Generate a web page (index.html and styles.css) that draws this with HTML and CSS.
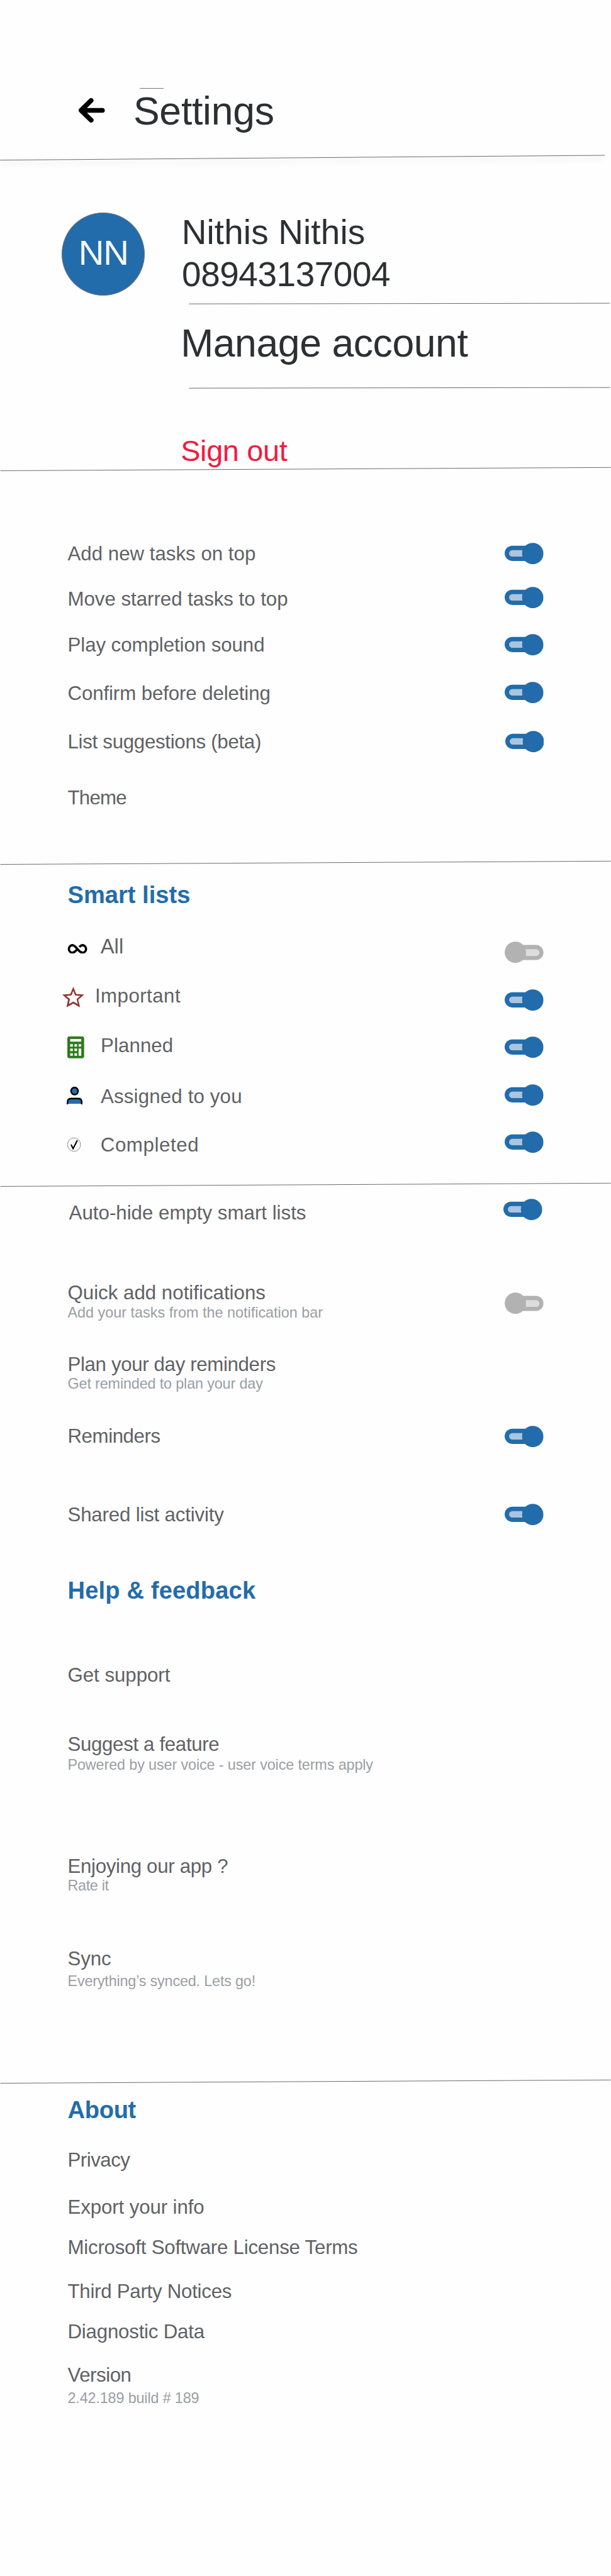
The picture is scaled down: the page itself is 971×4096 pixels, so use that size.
FILE: index.html
```html
<!DOCTYPE html>
<html lang="en">
<head>
<meta charset="utf-8">
<title>Settings</title>
<link rel="stylesheet" href="styles.css">
</head>
<body>
<svg class="defs" aria-hidden="true">
  <symbol id="on" viewBox="0 0 81 45">
    <rect x="0" y="6.3" width="60" height="31.6" rx="15.8" fill="#236cab"/>
    <circle cx="58.6" cy="22.5" r="22.3" fill="#236cab"/>
    <path d="M37 15.3H16a6.8 6.8 0 0 0 0 13.6H37q-1.3-6.8 0-13.6z" fill="#a9c5df"/>
  </symbol>
  <symbol id="off" viewBox="0 0 81 45">
    <rect x="21" y="7.2" width="60" height="31.6" rx="15.8" fill="#b2b2b2"/>
    <circle cx="22.4" cy="22.5" r="22.3" fill="#b2b2b2"/>
    <path d="M44 16.2H65.500a7 7 0 0 1 0 14H44q1.300-7 0-14z" fill="#dcddde"/>
  </symbol>
  <symbol id="rule" viewBox="0 0 1274 11">
    <path d="M0 8.500L1274 1.700" stroke="#6b6b6b" stroke-width="1.300"/>
  </symbol>
  <symbol id="shortrule" viewBox="0 0 881 5">
    <path d="M0 2.900L881 1.500" stroke="#6b6b6b" stroke-width="1.300"/>
  </symbol>
</svg>

<header class="header">
  <svg class="back" viewBox="0 0 54.500 51"><path d="M26 5L5 25.500L26 46M6 25.500H49.500" fill="none" stroke="#000" stroke-width="10" stroke-linecap="round" stroke-linejoin="round"/></svg>
  <div class="heading">
    <div class="tick"></div>
    <h1 class="title">Settings</h1>
  </div>
</header>
<svg class="header-rule" viewBox="0 0 1274 13"><path d="M0 11.300L1261 1.300" stroke="#6b6b6b" stroke-width="1.300"/></svg>

<section class="account">
  <div class="avatar">NN</div>
  <div class="info">
    <div class="name">Nithis Nithis</div>
    <div class="phone">08943137004</div>
    <svg class="short-rule first"><use href="#shortrule"/></svg>
    <div class="manage">Manage account</div>
    <svg class="short-rule second"><use href="#shortrule"/></svg>
    <div class="signout">Sign out</div>
  </div>
</section>
<svg class="rule rule-account"><use href="#rule"/></svg>

<section class="group">
  <div class="row add"><span>Add new tasks on top</span><svg class="toggle"><use href="#on"/></svg></div>
  <div class="row move"><span>Move starred tasks to top</span><svg class="toggle"><use href="#on"/></svg></div>
  <div class="row play"><span>Play completion sound</span><svg class="toggle"><use href="#on"/></svg></div>
  <div class="row confirm"><span>Confirm before deleting</span><svg class="toggle"><use href="#on"/></svg></div>
  <div class="row suggestions"><span>List suggestions (beta)</span><svg class="toggle"><use href="#on"/></svg></div>
  <div class="row theme"><span>Theme</span></div>
</section>
<svg class="rule rule-theme"><use href="#rule"/></svg>

<section class="group">
  <h2 class="section-title smart">Smart lists</h2>
  <div class="row all">
    <svg class="icon infinity" viewBox="0 0 42.300 20.600"><path d="M25.300 6.500C27.500 3.700 29.500 2.500 32 2.500A7.900 7.900 0 0 1 32 18.200C27.500 18.200 24.500 14.800 21 10.500C17.500 6 14.500 2.500 10.300 2.500A7.900 7.900 0 0 0 10.300 18.200C14 18.200 17 15.500 20.500 11" fill="none" stroke="#000" stroke-width="4.800"/></svg>
    <span>All</span><svg class="toggle"><use href="#off"/></svg>
  </div>
  <div class="row important">
    <svg class="icon star" viewBox="0 0 45.700 43"><path fill="#943232" fill-rule="evenodd" d="M23 0L29 15L45.700 16.500L33.300 27L37 43L23 35L8.700 43L12 27L0 16.500L16.700 15ZM23 8.500L19.200 18L8.200 19.200L16 25.500L13.700 36L23 30.800L32.200 36L29.800 25.500L37.500 19.200L26.500 18Z"/></svg>
    <span>Important</span><svg class="toggle"><use href="#on"/></svg>
  </div>
  <div class="row planned">
    <svg class="icon calc" viewBox="0 0 35 45.500"><rect width="35" height="45.500" rx="4.500" fill="#2d7a1e"/><path fill="#fefefe" d="M6 5.200h23v5.600h-23zM6 16h5.500v5.200h-5.500zM14.800 16h5.400v5.200h-5.400zM23.500 16h5.500v5.200h-5.500zM6 25.200h5.500v5.400h-5.500zM14.800 25.200h5.400v5.400h-5.400zM6 35h5.500v5.500h-5.500zM14.800 35h5.400v5.500h-5.400zM23.500 25.200h5.500v15.300h-5.500z"/></svg>
    <span>Planned</span><svg class="toggle"><use href="#on"/></svg>
  </div>
  <div class="row assigned">
    <svg class="icon person" viewBox="0 0 33 37"><g fill="#236cab" stroke="#000" stroke-width="3.300" stroke-linecap="round"><circle cx="16.400" cy="9" r="7.400"/><path d="M1.700 35.300V32Q1.700 24.500 9 24.500H24Q31.300 24.500 31.300 32V35.300"/></g></svg>
    <span>Assigned to you</span><svg class="toggle"><use href="#on"/></svg>
  </div>
  <div class="row completed">
    <svg class="icon check" viewBox="0 0 28 29"><ellipse cx="14" cy="14.500" rx="13.500" ry="14" fill="none" stroke="#555" stroke-width=".9"/><path d="M7.800 14.300L12 22.800L20.800 5.600" fill="none" stroke="#000" stroke-width="2.800"/></svg>
    <span>Completed</span><svg class="toggle"><use href="#on"/></svg>
  </div>
</section>
<svg class="rule rule-lists"><use href="#rule"/></svg>

<section class="group">
  <div class="row autohide"><span>Auto-hide empty smart lists</span><svg class="toggle"><use href="#on"/></svg></div>
  <div class="row quick"><span>Quick add notifications</span><svg class="toggle"><use href="#off"/></svg></div>
  <div class="sub quick-sub">Add your tasks from the notification bar</div>
  <div class="row plan"><span>Plan your day reminders</span></div>
  <div class="sub plan-sub">Get reminded to plan your day</div>
  <div class="row reminders"><span>Reminders</span><svg class="toggle"><use href="#on"/></svg></div>
  <div class="row shared"><span>Shared list activity</span><svg class="toggle"><use href="#on"/></svg></div>
</section>

<section class="group">
  <h2 class="section-title help">Help &amp; feedback</h2>
  <div class="row support"><span>Get support</span></div>
  <div class="row suggest"><span>Suggest a feature</span></div>
  <div class="sub suggest-sub">Powered by user voice - user voice terms apply</div>
  <div class="row enjoying"><span>Enjoying our app ?</span></div>
  <div class="sub enjoying-sub">Rate it</div>
  <div class="row sync"><span>Sync</span></div>
  <div class="sub sync-sub">Everything’s synced. Lets go!</div>
</section>
<svg class="rule rule-help"><use href="#rule"/></svg>

<section class="group">
  <h2 class="section-title about">About</h2>
  <div class="row privacy"><span>Privacy</span></div>
  <div class="row export"><span>Export your info</span></div>
  <div class="row license"><span>Microsoft Software License Terms</span></div>
  <div class="row notices"><span>Third Party Notices</span></div>
  <div class="row diagnostic"><span>Diagnostic Data</span></div>
  <div class="row version"><span>Version</span></div>
  <div class="sub version-sub">2.42.189 build # 189</div>
</section>
</body>
</html>
```
FILE: styles.css
```css
/* 1rem is 100 design units; the page is 12.74rem wide */
html { font-size: 76.24px; background: #fefefe; }
body {
  margin: 0;
  width: 971px;
  height: 4096px;
  overflow: hidden;
  display: flex;
  flex-direction: column;
  font-family: "Liberation Sans", Arial, sans-serif;
  color: #2d3033;
}
body > * { flex: none; }
h1, h2 { margin: 0; }
svg { display: block; flex: none; }
.defs { width: 0; height: 0; }

.header {
  display: flex;
  align-items: flex-start;
  box-sizing: border-box;
  height: 3.23rem;
  padding: 1.838rem 0 0 1.64rem;
}
.back { width: .545rem; height: .51rem; margin-top: .212rem; }
.heading { margin-left: .595rem; }
.tick { width: .503rem; height: 1px; margin-left: .127rem; background: #777; }
.title { font-size: .82rem; line-height: .9rem; font-weight: 400; margin-top: .01rem; letter-spacing: -.0033rem; }
.header-rule { width: 12.74rem; height: .13rem; overflow: visible; filter: drop-shadow(0 5px 4px rgba(0, 0, 0, .2)); }

.account { display: flex; align-items: flex-start; padding: 1.046rem 0 0 1.284rem; white-space: nowrap; }
.avatar {
  box-sizing: border-box;
  width: 1.74rem;
  height: 1.74rem;
  margin-top: .024rem;
  padding-left: .338rem;
  border: 1px solid #6f7072;
  border-radius: 50%;
  background: #236cab;
  color: #f5f8fb;
  font-size: .74rem;
  line-height: 1.65rem;
  letter-spacing: -.014rem;
}
.info { margin-left: .746rem; width: 8.97rem; }
.name, .phone { font-size: .72rem; line-height: .883rem; }
.name { letter-spacing: .002rem; padding-left: .02rem; }
.phone { letter-spacing: -.0055rem; padding-left: .025rem; }
.short-rule { width: 8.81rem; height: .05rem; margin-left: .16rem; }
.first { margin-top: .138rem; }
.second { margin-top: .469rem; }
.manage { margin-top: .341rem; font-size: .82rem; line-height: .9rem; letter-spacing: -.0055rem; }
.signout { height: .6rem; margin-top: .987rem; font-size: .615rem; line-height: .62rem; letter-spacing: -.0045rem; color: #f41a41; }

.rule { width: 12.74rem; height: .11rem; }
.rule-account { margin-top: .027rem; }
.rule-theme { margin-top: 1.086rem; }
.rule-lists { margin-top: .556rem; }
.rule-help { margin-top: 1.869rem; }

.group { padding: 0 1.41rem; white-space: nowrap; }
.section-title { height: .6rem; font-size: .5rem; line-height: .62rem; font-weight: 700; color: #236cab; }
.row {
  display: flex;
  align-items: flex-start;
  height: .45rem;
  font-size: .41rem;
  line-height: .47rem;
  color: #5f6265;
}
.sub { height: .36rem; font-size: .307rem; line-height: .38rem; color: #9a9ea4; }
.toggle { width: .81rem; height: .45rem; margin-left: auto; }

.add { margin-top: 1.473rem; }
.add .toggle { margin-top: .003rem; }
.move { margin-top: .501rem; letter-spacing: -.0004rem; }
.move .toggle { margin-top: -.028rem; }
.play { margin-top: .505rem; letter-spacing: -.0009rem; }
.play .toggle { margin-top: .006rem; }
.confirm { margin-top: .565rem; letter-spacing: -.0015rem; }
.confirm .toggle { margin-top: -.018rem; }
.suggestions { margin-top: .556rem; letter-spacing: -.0039rem; }
.suggestions .toggle { margin-top: .005rem; margin-right: -.01rem; }
.theme { margin-top: .72rem; letter-spacing: -.01rem; }

.smart { margin-top: .3rem; }
.all { margin-top: .554rem; font-size: .43rem; }
.all .toggle { margin-top: .126rem; }
.infinity { width: .423rem; height: .206rem; margin: .173rem .263rem 0 0; }
.important { margin-top: .586rem; letter-spacing: .006rem; }
.important .toggle { margin-top: .09rem; }
.star { width: .457rem; height: .43rem; margin: .04rem .22rem 0 -.107rem; }
.planned { margin-top: .587rem; letter-spacing: .001rem; }
.planned .toggle { margin-top: .039rem; }
.calc { width: .35rem; height: .455rem; margin: .033rem .34rem 0 0; }
.assigned { margin-top: .607rem; letter-spacing: .002rem; }
.assigned .toggle { margin-top: -.031rem; }
.person { width: .33rem; height: .37rem; margin: .023rem .376rem 0 -.017rem; }
.completed { margin-top: .563rem; letter-spacing: .008rem; }
.completed .toggle { margin-top: -.054rem; }
.check { width: .28rem; height: .29rem; margin: .073rem .405rem 0 0; }

.autohide { margin-top: .292rem; padding-left: .028rem; }
.autohide .toggle { margin: -.054rem .023rem 0 auto; }
.quick { margin-top: 1.222rem; }
.quick .toggle { margin-top: .223rem; }
.quick-sub { margin-top: .006rem; }
.plan { margin-top: .681rem; letter-spacing: -.0047rem; }
.plan-sub { letter-spacing: -.002rem; }
.reminders { margin-top: .687rem; letter-spacing: -.0057rem; }
.reminders .toggle { margin-top: .014rem; }
.shared { margin-top: 1.183rem; letter-spacing: -.0024rem; }
.shared .toggle { margin-top: .01rem; }

.help { margin-top: 1.044rem; letter-spacing: .002rem; }
.support { margin-top: 1.253rem; letter-spacing: -.0005rem; }
.suggest { margin-top: .993rem; letter-spacing: -.0045rem; }
.suggest-sub { margin-top: .02rem; letter-spacing: -.0017rem; }
.enjoying { margin-top: 1.72rem; letter-spacing: -.0043rem; }
.enjoying-sub { letter-spacing: -.0045rem; }
.sync { margin-top: 1.118rem; letter-spacing: -.001rem; }
.sync-sub { margin-top: .061rem; letter-spacing: -.0024rem; }

.about { margin-top: .218rem; letter-spacing: -.004rem; }
.privacy { margin-top: .526rem; letter-spacing: -.0065rem; }
.export { margin-top: .535rem; letter-spacing: -.0015rem; }
.license { margin-top: .397rem; letter-spacing: -.003rem; }
.notices { margin-top: .458rem; letter-spacing: -.0035rem; }
.diagnostic { margin-top: .397rem; letter-spacing: -.0028rem; }
.version { margin-top: .449rem; letter-spacing: -.006rem; }
.version-sub { margin-top: .082rem; letter-spacing: -.002rem; }
```
